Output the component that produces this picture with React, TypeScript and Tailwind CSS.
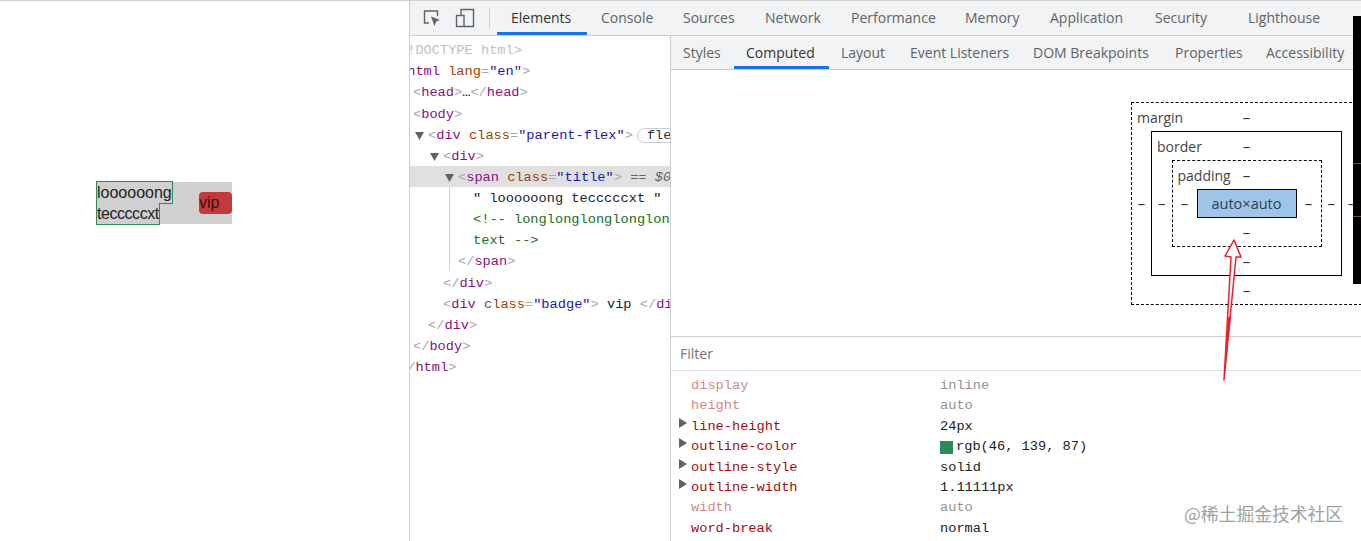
import type { ReactNode } from "react";

const UI_FONT = "font-['Open_Sans','Noto_Sans',sans-serif]";
const MONO_FONT = "font-['Liberation_Mono',monospace]";

const mainTabs = [
  { label: "Elements", width: "w-[90px]", active: true },
  { label: "Console", width: "w-[82px]" },
  { label: "Sources", width: "w-[82px]" },
  { label: "Network", width: "w-[86px]" },
  { label: "Performance", width: "w-[114px]" },
  { label: "Memory", width: "w-[85px]" },
  { label: "Application", width: "w-[105px]" },
  { label: "Security", width: "w-[93px]" },
  { label: "Lighthouse", width: "w-[90px]" },
];

const sideTabs = [
  { label: "Styles", width: "w-[63px]" },
  { label: "Computed", width: "w-[95px]", active: true },
  { label: "Layout", width: "w-[69px]" },
  { label: "Event Listeners", width: "w-[123px]" },
  { label: "DOM Breakpoints", width: "w-[142px]" },
  { label: "Properties", width: "w-[91px]" },
  { label: "Accessibility", width: "w-[95px]" },
];

const computed = [
  { name: "display", value: "inline", dim: true },
  { name: "height", value: "auto", dim: true },
  { name: "line-height", value: "24px", arrow: true },
  { name: "outline-color", value: "rgb(46, 139, 87)", arrow: true, swatch: true },
  { name: "outline-style", value: "solid", arrow: true },
  { name: "outline-width", value: "1.11111px", arrow: true },
  { name: "width", value: "auto", dim: true },
  { name: "word-break", value: "normal" },
];

const Tag = ({ children }: { children: ReactNode }) => <span className="text-[#881280]">{children}</span>;
const Br = ({ children }: { children: ReactNode }) => <span className="text-[#a8a8a8]">{children}</span>;
const Attr = ({ children }: { children: ReactNode }) => <span className="text-[#994500]">{children}</span>;
const Val = ({ children }: { children: ReactNode }) => <span className="text-[#1a1aa6]">{children}</span>;

function Caret({ className = "" }: { className?: string }) {
  return (
    <svg width="9" height="8" viewBox="0 0 9 8" className={`shrink-0 ${className}`}>
      <path d="M0 0h9L4.5 8z" fill="#5f6368" />
    </svg>
  );
}

function Row({
  indent,
  caret,
  selected,
  children,
}: {
  indent: string;
  caret?: boolean;
  selected?: boolean;
  children: ReactNode;
}) {
  return (
    <div className={`flex h-[21.13px] items-center whitespace-nowrap pt-[3px] leading-none ${indent} ${selected ? "bg-[#e0e0e0]" : ""}`}>
      {caret && <Caret className="-ml-[13px] mr-[4px]" />}
      {children}
    </div>
  );
}

function Dash() {
  return <span className="text-[15px] leading-none text-[#303030]">–</span>;
}

function BoxLayer({
  label,
  frame,
  pad,
  children,
}: {
  label: string;
  frame: string;
  pad: string;
  children: ReactNode;
}) {
  return (
    <div className={`flex flex-col ${frame}`}>
      <div className="relative flex h-[28px] items-center justify-center">
        <span className="absolute left-[5px] text-[14px] text-[#444]">{label}</span>
        <Dash />
      </div>
      <div className="flex items-center">
        <div className={`flex justify-center ${pad}`}>
          <Dash />
        </div>
        {children}
        <div className={`flex justify-center ${pad}`}>
          <Dash />
        </div>
      </div>
      <div className="flex h-[28px] items-center justify-center">
        <Dash />
      </div>
    </div>
  );
}

export default function App() {
  return (
    <div className={`relative flex h-[541px] w-[1361px] overflow-hidden border-t border-[#d0d0d0] bg-white ${UI_FONT}`}>
      {/* inspected page */}
      <div className="w-[409px] shrink-0 pl-[96px] pt-[181px] font-['Liberation_Sans',sans-serif] text-[16px] leading-[21px] text-[#222]">
        <div className="flex h-[42px] w-[136px] items-end justify-between bg-[#d0d0d0]">
          <div className="w-[78px] pl-[1px]">
            <span className="py-[2px] outline outline-[1px] outline-[#2e8b57]">
              loooooong <span className="tracking-[-0.45px]">tecccccxt</span>
            </span>
          </div>
          <div className="mb-[10px] h-[22px] w-[33px] rounded-[4px] bg-[#c43a3a] text-[#3a1010]">vip</div>
        </div>
      </div>

      {/* devtools */}
      <div className="flex min-w-0 flex-1 flex-col border-l border-[#cbcdd1]">
        <div className="flex h-[35px] shrink-0 items-stretch border-b border-[#cbcdd1] bg-[#f1f3f4]">
          <div className="flex items-center pl-[12px]">
            <svg width="20" height="20" viewBox="0 0 20 20" fill="none" stroke="#5f6368" strokeWidth="1.4">
              <path d="M7 15H2.5V3h13v5" />
              <path d="M9 8.5l9 3.5-3.8 1.6L12.5 18z" fill="#5f6368" stroke="none" />
            </svg>
            <svg width="20" height="20" viewBox="0 0 20 20" fill="none" stroke="#5f6368" strokeWidth="1.4" className="ml-[13px]">
              <path d="M6 7V1.5h12.5v17H9" />
              <rect x="1.5" y="7.5" width="7.5" height="11" />
            </svg>
            <span className="ml-[14px] h-[20px] w-px bg-[#cbcdd1]" />
          </div>
          <div className="ml-[7px] flex">
            {mainTabs.map((t) => (
              <div
                key={t.label}
                className={`${t.width} flex items-center whitespace-nowrap border-b-[3px] pl-[14px] pt-[1px] text-[14px] ${
                  t.active ? "border-[#1a73e8] text-[#333]" : "border-transparent text-[#5f6368]"
                }`}
              >
                {t.label}
              </div>
            ))}
          </div>
        </div>

        <div className="flex min-h-0 flex-1">
          {/* dom tree */}
          <div className={`w-[260px] shrink-0 overflow-hidden pt-[3px] text-[13.67px] ${MONO_FONT}`}>
            <Row indent="-ml-[11px]">
              <span className="text-[#c0c0c0]">&lt;!DOCTYPE html&gt;</span>
            </Row>
            <Row indent="-ml-[11px]">
              <Br>&lt;</Br>
              <Tag>html</Tag>
              <Attr>&nbsp;lang</Attr>
              <Br>=</Br>
              <Val>"en"</Val>
              <Br>&gt;</Br>
            </Row>
            <Row indent="pl-[3px]">
              <Br>&lt;</Br>
              <Tag>head</Tag>
              <Br>&gt;</Br>…<Br>&lt;/</Br>
              <Tag>head</Tag>
              <Br>&gt;</Br>
            </Row>
            <Row indent="pl-[3px]">
              <Br>&lt;</Br>
              <Tag>body</Tag>
              <Br>&gt;</Br>
            </Row>
            <Row indent="pl-[18px]" caret>
              <Br>&lt;</Br>
              <Tag>div</Tag>
              <Attr>&nbsp;class</Attr>
              <Br>=</Br>
              <Val>"parent-flex"</Val>
              <Br>&gt;</Br>
              <span className="ml-[4px] rounded-[8px] border border-[#cbcdd1] pl-[9px] pr-[20px] text-[#303030]">flex</span>
            </Row>
            <Row indent="pl-[33px]" caret>
              <Br>&lt;</Br>
              <Tag>div</Tag>
              <Br>&gt;</Br>
            </Row>
            <Row indent="pl-[48px]" caret selected>
              <Br>&lt;</Br>
              <Tag>span</Tag>
              <Attr>&nbsp;class</Attr>
              <Br>=</Br>
              <Val>"title"</Val>
              <Br>&gt;</Br>
              <span className="text-[#5f6368]">&nbsp;==&nbsp;<i>$0</i></span>
            </Row>
            <div className="ml-[39px] border-l border-[#c5d6e6]">
              <Row indent="pl-[23px]">
                <span className="text-[#222]">" loooooong tecccccxt "</span>
              </Row>
              <Row indent="pl-[23px]">
                <span className="text-[#236e25]">&lt;!-- longlonglonglonglonglong</span>
              </Row>
              <Row indent="pl-[23px]">
                <span className="text-[#236e25]">text --&gt;</span>
              </Row>
              <Row indent="pl-[8px]">
                <Br>&lt;/</Br>
                <Tag>span</Tag>
                <Br>&gt;</Br>
              </Row>
            </div>
            <Row indent="pl-[33px]">
              <Br>&lt;/</Br>
              <Tag>div</Tag>
              <Br>&gt;</Br>
            </Row>
            <Row indent="pl-[33px]">
              <Br>&lt;</Br>
              <Tag>div</Tag>
              <Attr>&nbsp;class</Attr>
              <Br>=</Br>
              <Val>"badge"</Val>
              <Br>&gt;</Br>
              <span className="text-[#222]">&nbsp;vip&nbsp;</span>
              <Br>&lt;/</Br>
              <Tag>div</Tag>
              <Br>&gt;</Br>
            </Row>
            <Row indent="pl-[18px]">
              <Br>&lt;/</Br>
              <Tag>div</Tag>
              <Br>&gt;</Br>
            </Row>
            <Row indent="pl-[3px]">
              <Br>&lt;/</Br>
              <Tag>body</Tag>
              <Br>&gt;</Br>
            </Row>
            <Row indent="-ml-[11px]">
              <Br>&lt;/</Br>
              <Tag>html</Tag>
              <Br>&gt;</Br>
            </Row>
          </div>

          {/* sidebar */}
          <div className="flex min-w-0 flex-1 flex-col border-l border-[#cbcdd1]">
            <div className="flex h-[34px] shrink-0 items-stretch border-b border-[#cbcdd1] bg-[#f1f3f4]">
              <div className="flex">
                {sideTabs.map((t) => (
                  <div
                    key={t.label}
                    className={`${t.width} flex items-center whitespace-nowrap border-b-[3px] pl-[12px] pt-[2px] text-[14px] ${
                      t.active ? "border-[#1a73e8] text-[#333]" : "border-transparent text-[#5f6368]"
                    }`}
                  >
                    {t.label}
                  </div>
                ))}
              </div>
            </div>

            {/* box model */}
            <div className="h-[267px] shrink-0 overflow-hidden border-b border-[#cbcdd1] pl-[460px] pt-[32px]">
              <BoxLayer label="margin" pad="w-[20px]" frame="w-[231px] border border-dashed border-black">
                <BoxLayer label="border" pad="w-[20px]" frame="w-[191px] border border-black">
                  <BoxLayer label="padding" pad="w-[24px]" frame="w-[150px] border border-dashed border-black">
                    <div className="flex h-[29px] w-[100px] items-center justify-center border border-black bg-[#9fc5e8] text-[14.5px] text-[#2c3e55]">
                      auto×auto
                    </div>
                  </BoxLayer>
                </BoxLayer>
              </BoxLayer>
            </div>

            {/* filter */}
            <div className="flex h-[34px] shrink-0 items-center border-b border-[#e0e0e0] pl-[9px] text-[14px] text-[#757575]">
              Filter
            </div>

            {/* computed list */}
            <div className={`pt-[5px] text-[13.67px] ${MONO_FONT}`}>
              {computed.map((p) => (
                <div key={p.name} className={`flex h-[20.4px] items-center whitespace-nowrap pl-[20px] ${p.dim ? "opacity-50" : ""}`}>
                  <span className="relative w-[249px] text-[#a50d0d]">
                    {p.arrow && (
                      <svg width="8" height="10" viewBox="0 0 8 10" className="absolute -left-[12px] top-[1px]">
                        <path d="M0 0l8 5-8 5z" fill="#5f6368" />
                      </svg>
                    )}
                    {p.name}
                  </span>
                  {p.swatch && <span className="mr-[3px] h-[13px] w-[13px] bg-[#2e8b57]" />}
                  <span className="text-[#222]">{p.value}</span>
                </div>
              ))}
            </div>
          </div>
        </div>
      </div>

      {/* black window edge over the screenshot */}
      <div className="absolute left-[1353px] top-[15px] flex h-[268px] w-[8px] flex-col bg-black">
        <span className="mt-[147px] h-px bg-[#7a4a30]" />
        <span className="mt-[52px] h-px bg-[#7a4a30]" />
      </div>

      {/* hand drawn arrow */}
      <svg width="30" height="150" viewBox="0 0 30 150" className="absolute left-[1215px] top-[236px]">
        <path d="M19 3L26 20 21 20 9 143 16 20 10 19z" fill="white" stroke="#e8212f" strokeWidth="1.5" strokeLinejoin="round" />
        <path d="M9 143L13 80 16 80z" fill="#e8212f" />
      </svg>

      {/* watermark */}
      <div className="absolute left-[1184px] top-[500px] font-['Noto_Sans_CJK_SC',sans-serif] text-[17.8px] leading-[24px] text-[#a0a0a0]">
        @稀土掘金技术社区
      </div>
    </div>
  );
}
